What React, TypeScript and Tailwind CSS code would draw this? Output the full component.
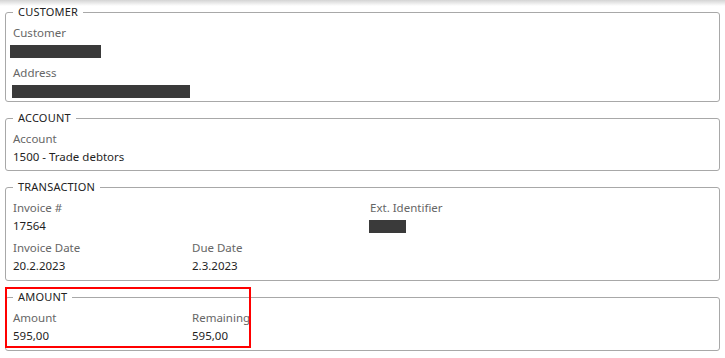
import React from 'react';

type Field = { label: string; value?: string; bar?: number; barShift?: string };

const font = { fontFamily: '"Noto Sans", "Open Sans", Arial, sans-serif' };

const FieldBlock: React.FC<{ field: Field }> = ({ field }) => (
  <div>
    <div className="text-[11.5px] leading-[18px] text-[#666666]">{field.label}</div>
    {field.bar ? (
      <div className="h-[18px] flex items-center">
        <div className={`h-[13px] bg-[#3a3a3a] ${field.barShift ?? ''}`} style={{ width: field.bar }} />
      </div>
    ) : (
      <div className="text-[11.5px] leading-[18px] text-[#1f1f1f]">{field.value}</div>
    )}
  </div>
);

const Section: React.FC<{ title: string; pb?: string; children: React.ReactNode }> = ({ title, pb = 'pb-[5px]', children }) => (
  <fieldset className={`border border-[#a8a8a8] rounded-[3px] px-[7px] ${pb}`}>
    <legend className="px-[5px] text-[11px] leading-[12px] text-[#222222] tracking-[0.2px]">{title}</legend>
    <div className="pt-[6px]">{children}</div>
  </fieldset>
);

export default function App() {
  return (
    <div className="relative w-[725px] h-[358px] bg-white overflow-hidden" style={font}>
      <div className="absolute inset-x-0 top-0 h-[6px] bg-gradient-to-b from-[#d4d4d4] to-white/0 pointer-events-none" />

      <div className="flex flex-col gap-[10px] pt-[6px] px-[5px]">
        <Section title="CUSTOMER" pb="pb-[1px]">
          <div className="flex flex-col gap-[4px]">
            <FieldBlock field={{ label: 'Customer', bar: 91, barShift: 'ml-[-3px]' }} />
            <FieldBlock field={{ label: 'Address', bar: 178, barShift: 'ml-[-1px]' }} />
          </div>
        </Section>

        <Section title="ACCOUNT" pb="pb-[4px]">
          <FieldBlock field={{ label: 'Account', value: '1500 - Trade debtors' }} />
        </Section>

        <Section title="TRANSACTION">
          <div className="grid grid-cols-[179px_178px_178px_1fr] gap-y-[4px]">
            <FieldBlock field={{ label: 'Invoice #', value: '17564' }} />
            <div />
            <FieldBlock field={{ label: 'Ext. Identifier', bar: 37, barShift: 'ml-[-1px]' }} />
            <div />
            <FieldBlock field={{ label: 'Invoice Date', value: '20.2.2023' }} />
            <FieldBlock field={{ label: 'Due Date', value: '2.3.2023' }} />
          </div>
        </Section>

        <Section title="AMOUNT">
          <div className="grid grid-cols-[179px_178px_178px_1fr]">
            <FieldBlock field={{ label: 'Amount', value: '595,00' }} />
            <FieldBlock field={{ label: 'Remaining', value: '595,00' }} />
          </div>
        </Section>
      </div>

      <div className="absolute left-[5px] top-[287px] w-[246px] h-[61px] border-2 border-[#ff0000] pointer-events-none" />
    </div>
  );
}
